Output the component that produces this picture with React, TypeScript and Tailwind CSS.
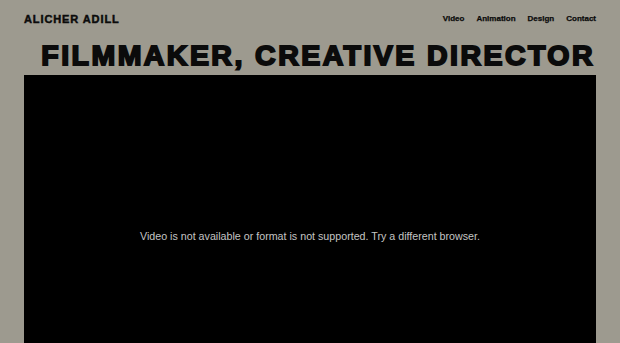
import React from "react";

const navItems = ["Video", "Animation", "Design", "Contact"];

const App = () => {
  return (
    <div className="min-h-screen bg-[#9d9a8f] px-6 font-['Liberation_Sans',Arial,sans-serif] text-[#0b0b0b]">
      <header className="flex h-[35px] items-center justify-between pt-[3px]">
        <a className="text-[11px] font-bold tracking-[0.9px] [-webkit-text-stroke:0.45px_#0b0b0b]">
          ALICHER ADILL
        </a>
        <nav className="flex gap-[12px]">
          {navItems.map((item) => (
            <a key={item} className="text-[8px] font-bold [-webkit-text-stroke:0.25px_#0b0b0b]">
              {item}
            </a>
          ))}
        </nav>
      </header>
      <h1 className="pr-[1px] text-right text-[28.5px] leading-[40px] font-bold tracking-[2.45px] [-webkit-text-stroke:1.9px_#0b0b0b]">
        FILMMAKER, CREATIVE DIRECTOR
      </h1>
      <div className="flex aspect-video w-full items-center justify-center bg-black">
        <p className="text-[10.7px] font-light text-[#c4c4c4]">
          Video is not available or format is not supported. Try a different browser.
        </p>
      </div>
    </div>
  );
};

export default App;
